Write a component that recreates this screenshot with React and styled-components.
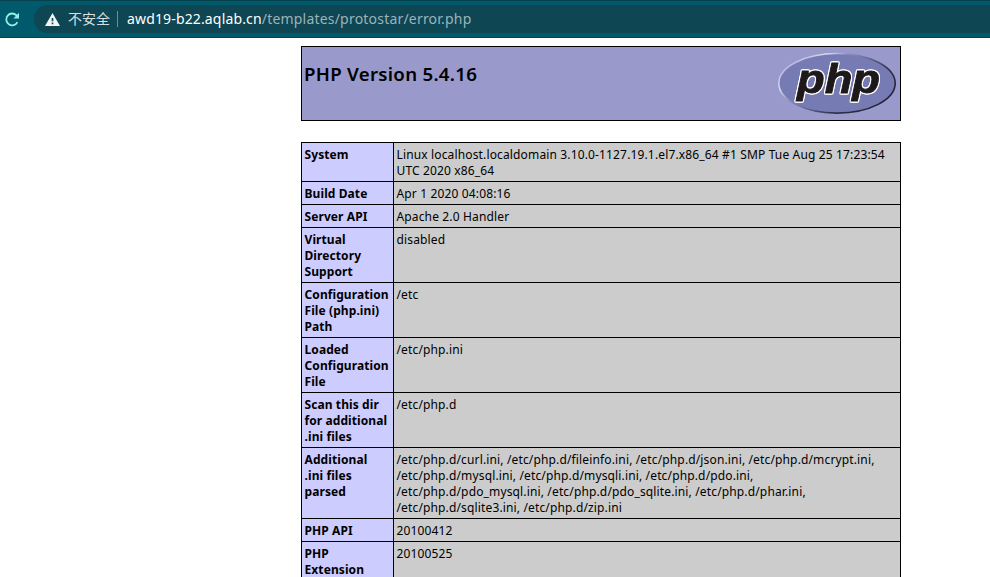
import React from "react";
import styled, { createGlobalStyle } from "styled-components";

const Global = createGlobalStyle`
  *, *::before, *::after { box-sizing: border-box; }
  html, body { margin: 0; height: 100%; overflow: hidden; background: #fff; }
`;

const Page = styled.div`
  height: 577px;
  overflow: hidden;
  font-family: "Noto Sans", "Noto Sans CJK SC", sans-serif;
  color: #000;
`;

const Toolbar = styled.header`
  display: flex;
  align-items: center;
  height: 38px;
  padding-left: 5px;
  background: #005a6c;
  border-top: 1px solid #07414d;
  border-bottom: 1px solid #07414d;
`;

const ReloadIcon = styled.svg`
  flex: none;
  width: 15px;
  height: 15px;
  margin-right: 14px;
`;

const AddressBar = styled.div`
  flex: 1;
  display: flex;
  align-items: center;
  height: 28px;
  padding-left: 11px;
  background: #0e4653;
  border-radius: 14px 0 0 14px;
  white-space: nowrap;
`;

const WarningIcon = styled.svg`
  flex: none;
  width: 15px;
  height: 13px;
  margin-right: 8px;
`;

const Security = styled.span`
  width: 49px;
  margin-top: -2px;
  font: 14px/20px "Noto Sans CJK SC", sans-serif;
  color: #d5e0e3;
`;

const Divider = styled.span`
  width: 1px;
  height: 16px;
  margin-right: 9px;
  background: #6d8c95;
`;

const Url = styled.span`
  font-size: 14px;
  line-height: 20px;
  letter-spacing: 0.2px;
  color: #9bb4ba;
`;

const Host = styled.span`
  letter-spacing: 0.15px;
  color: #fff;
`;

const Content = styled.main`
  width: 600px;
  margin: 8px 0 0 301px;
`;

const Banner = styled.section`
  display: flex;
  justify-content: space-between;
  height: 75px;
  padding: 6px 4px 0 2px;
  background: #9999cc;
  border: 1px solid #000;
`;

const Title = styled.h1`
  margin: 9px 0 0;
  font-size: 18.7px;
  line-height: 24px;
  font-weight: 600;
  letter-spacing: 0.27px;
  white-space: nowrap;
`;

const Logo = styled.svg`
  width: 120px;
  height: 64px;
  margin-top: -1px;
`;

const LogoText = styled.text`
  font: italic bold 41px "Liberation Sans", sans-serif;
  fill: #1d191b;
  stroke: #1d191b;
  stroke-width: 0.9px;
  filter: drop-shadow(1px 0 0 #fff) drop-shadow(-1px 0 0 #fff)
    drop-shadow(0 1px 0 #fff) drop-shadow(0 -1px 0 #fff);
`;

const Info = styled.section`
  margin-top: 21px;
  border: 1px solid #000;
  border-bottom: 0;
`;

const Row = styled.div`
  display: grid;
  grid-template-columns: 92px 1fr;
  border-bottom: 1px solid #000;
  font-size: 12px;
  line-height: 16px;
`;

const Label = styled.div`
  padding: 4px 0 2px 2.5px;
  background: #ccccff;
  border-right: 1px solid #000;
  font-weight: 700;
  letter-spacing: 0.09px;
`;

const Value = styled.div`
  padding: 4px 0 2px 2.5px;
  background: #cccccc;
  letter-spacing: 0.145px;
`;

const Line = styled.div`
  white-space: nowrap;
`;

const rows = [
  {
    label: ["System"],
    value: ["Linux localhost.localdomain 3.10.0-1127.19.1.el7.x86_64 #1 SMP Tue Aug 25 17:23:54", "UTC 2020 x86_64"],
  },
  { label: ["Build Date"], value: ["Apr 1 2020 04:08:16"] },
  { label: ["Server API"], value: ["Apache 2.0 Handler"] },
  { label: ["Virtual", "Directory", "Support"], value: ["disabled"] },
  { label: ["Configuration", "File (php.ini)", "Path"], value: ["/etc"] },
  { label: ["Loaded", "Configuration", "File"], value: ["/etc/php.ini"] },
  { label: ["Scan this dir", "for additional", ".ini files"], value: ["/etc/php.d"] },
  {
    label: ["Additional", ".ini files", "parsed"],
    value: [
      "/etc/php.d/curl.ini, /etc/php.d/fileinfo.ini, /etc/php.d/json.ini, /etc/php.d/mcrypt.ini,",
      "/etc/php.d/mysql.ini, /etc/php.d/mysqli.ini, /etc/php.d/pdo.ini,",
      "/etc/php.d/pdo_mysql.ini, /etc/php.d/pdo_sqlite.ini, /etc/php.d/phar.ini,",
      "/etc/php.d/sqlite3.ini, /etc/php.d/zip.ini",
    ],
  },
  { label: ["PHP API"], value: ["20100412"] },
  { label: ["PHP", "Extension"], value: ["20100525"] },
];

const Lines = ({ items }) => items.map((text) => <Line key={text}>{text}</Line>);

function PhpLogo() {
  return (
    <Logo viewBox="0 0 120 64" role="img" aria-label="php">
      <defs>
        <linearGradient id="rim" x1="0" y1="0.2" x2="0.9" y2="0.8">
          <stop offset="0" stopColor="#a9acd4" />
          <stop offset="0.22" stopColor="#d9daee" />
          <stop offset="0.36" stopColor="#8e91bd" />
          <stop offset="0.55" stopColor="#62668f" />
          <stop offset="0.75" stopColor="#34344e" />
          <stop offset="1" stopColor="#222236" />
        </linearGradient>
      </defs>
      <ellipse cx="61" cy="31.3" rx="58.2" ry="29.8" fill="#777bb3" stroke="url(#rim)" strokeWidth="1.6" />
      <LogoText x="21" y="40.5" textLength="83" lengthAdjust="spacingAndGlyphs">
        php
      </LogoText>
    </Logo>
  );
}

export default function App() {
  return (
    <Page>
      <Global />
      <Toolbar>
        <ReloadIcon viewBox="0 0 15 15" fill="none">
          <path d="M12.4 10.1A5.9 5.9 0 1 1 11.5 3.4L12.5 4.5" stroke="#8ff0ea" strokeWidth="1.8" />
          <path d="M14 0.8V6.4H8.4Z" fill="#8ff0ea" />
        </ReloadIcon>
        <AddressBar>
          <WarningIcon viewBox="0 0 15 13">
            <path d="M7.5 0L15 13H0Z" fill="#f1f4f5" />
            <path d="M6.7 5h1.6v3.3H6.7zM6.7 9.6h1.6v1.6H6.7z" fill="#0e4653" />
          </WarningIcon>
          <Security>不安全</Security>
          <Divider />
          <Url>
            <Host>awd19-b22.aqlab.cn</Host>/templates/protostar/error.php
          </Url>
        </AddressBar>
      </Toolbar>
      <Content>
        <Banner>
          <Title>PHP Version 5.4.16</Title>
          <PhpLogo />
        </Banner>
        <Info>
          {rows.map((row) => (
            <Row key={row.label.join(" ")}>
              <Label>
                <Lines items={row.label} />
              </Label>
              <Value>
                <Lines items={row.value} />
              </Value>
            </Row>
          ))}
        </Info>
      </Content>
    </Page>
  );
}
